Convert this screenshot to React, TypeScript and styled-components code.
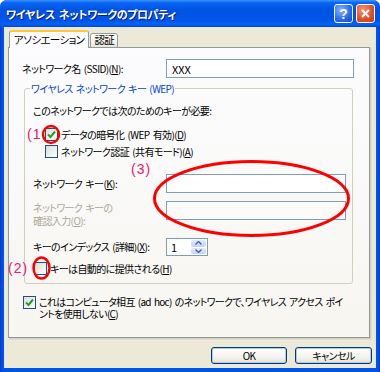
import styled, { createGlobalStyle } from 'styled-components';

const FONT = `"Noto Sans CJK JP", "Noto Sans", sans-serif`;

const GlobalStyle = createGlobalStyle`
  html, body {
    margin: 0;
    padding: 0;
    background: #ffffff;
  }
  body {
    font-family: ${FONT};
  }
`;

const Window = styled.div`
  position: relative;
  width: 380px;
  height: 372px;
  box-sizing: border-box;
  display: flex;
  flex-direction: column;
  background: linear-gradient(to right, #0831d9, #0054e3 2px, #0054e3 calc(100% - 2px), #0831d9);
  border-radius: 7px 7px 0 0;
  overflow: hidden;
  font-family: ${FONT};
  font-size: 10px;
  letter-spacing: -0.6px;
  word-spacing: 1.5px;
  font-feature-settings: "palt";
  text-autospace: no-autospace;
  color: #000000;
`;

const TitleBar = styled.div`
  flex: none;
  height: 27px;
  display: flex;
  align-items: center;
  padding: 0 5px 0 6px;
  background: linear-gradient(
    to bottom,
    #3d95ff 0%,
    #0a66f5 10%,
    #0054e3 35%,
    #0055e8 75%,
    #0062f7 90%,
    #0048d4 100%
  );
`;

const Title = styled.div`
  flex: 1;
  color: #ffffff;
  font-weight: bold;
  font-size: 11px;
  letter-spacing: -0.4px;
  word-spacing: 2px;
  text-shadow: 1px 1px 0 #0a1883;
  white-space: nowrap;
`;

const CaptionButton = styled.div<{ $kind: 'help' | 'close' }>`
  width: 17px;
  height: 17px;
  margin-left: ${({ $kind }) => ($kind === 'close' ? '3px' : '0')};
  border: 1px solid #ffffff;
  border-radius: 3px;
  display: flex;
  align-items: center;
  justify-content: center;
  background: ${({ $kind }) =>
    $kind === 'close'
      ? 'radial-gradient(circle at 35% 30%, #f49a7a, #e0512a 55%, #c23a13)'
      : 'radial-gradient(circle at 35% 30%, #8cb4ff, #2a6ef5 55%, #1548c8)'};
  color: #ffffff;
  font-family: "Liberation Sans", sans-serif;
  font-weight: bold;
  font-size: 14px;
  letter-spacing: 0;
  line-height: 1;
`;

const Body = styled.div`
  flex: 1;
  margin: 0 4px 4px 4px;
  padding: 3px 6px 0 4px;
  background: #ece9d8;
  display: flex;
  flex-direction: column;
`;

const TabStrip = styled.div`
  display: flex;
  align-items: flex-end;
  height: 18px;
  margin-left: 1px;
  margin-bottom: -1px;
  position: relative;
  z-index: 1;
`;

const Tab = styled.div<{ $active?: boolean }>`
  box-sizing: border-box;
  height: ${({ $active }) => ($active ? '18px' : '15px')};
  padding: 0 ${({ $active }) => ($active ? '4px' : '3px')};
  margin-right: ${({ $active }) => ($active ? '1px' : '0')};
  display: flex;
  align-items: center;
  border: 1px solid #919b9c;
  border-bottom: ${({ $active }) => ($active ? 'none' : '1px solid #919b9c')};
  border-top: ${({ $active }) => ($active ? '2px solid #ffc83c' : '1px solid #919b9c')};
  border-radius: 3px 3px 0 0;
  background: ${({ $active }) =>
    $active ? '#fcfcfe' : 'linear-gradient(to bottom, #ffffff, #f3f2ec 70%, #e6e4da)'};
  white-space: nowrap;
  font-size: 10.5px;
  line-height: 1;
`;

const Panel = styled.div`
  box-sizing: border-box;
  height: 291px;
  border: 1px solid #919b9c;
  box-shadow: 1px 1px 0 #d0cebf, 2px 2px 0 #e3e0d0;
  background: linear-gradient(to bottom, #fcfcfe, #f7f6f1);
  padding: 11px 0 0 13px;
  display: flex;
  flex-direction: column;
`;

const Row = styled.div<{ $top?: number; $align?: string; $height?: number }>`
  display: flex;
  align-items: ${({ $align }) => $align || 'center'};
  margin-top: ${({ $top }) => $top || 0}px;
  height: ${({ $height }) => ($height ? `${$height}px` : 'auto')};
  white-space: nowrap;
`;

const Label = styled.div<{ $width: number; $disabled?: boolean }>`
  width: ${({ $width }) => $width}px;
  flex: none;
  line-height: ${({ $disabled }) => ($disabled ? '13px' : '12px')};
  color: ${({ $disabled }) => ($disabled ? '#aca899' : '#000000')};
`;

const TextBox = styled.div<{ $width: number; $disabled?: boolean }>`
  box-sizing: border-box;
  width: ${({ $width }) => $width}px;
  height: 19px;
  flex: none;
  border: 1px solid #7f9db9;
  background: ${({ $disabled }) => ($disabled ? '#fbfbf9' : '#ffffff')};
  padding: 0 5px;
  display: flex;
  align-items: center;
  font-size: 11px;
  letter-spacing: 0;
`;

const GroupBox = styled.div`
  position: relative;
  box-sizing: border-box;
  width: 329px;
  margin: 10px 0 0 2px;
  border: 1px solid #d0d0bf;
  border-radius: 3px;
  padding: 0 0 8px 8px;
  display: flex;
  flex-direction: column;
`;

const Legend = styled.div`
  position: absolute;
  top: -7px;
  left: 5px;
  padding: 0 1px;
  background: #fcfcfe;
  color: #0046d5;
  line-height: 13px;
  white-space: nowrap;
`;

const Plain = styled.div`
  line-height: 14px;
  white-space: nowrap;
`;

const CheckRow = styled.div<{ $top: number; $indent?: number; $align?: string }>`
  display: flex;
  align-items: ${({ $align }) => $align || 'center'};
  gap: 3px;
  height: ${({ $align }) => ($align ? 'auto' : '13px')};
  margin-top: ${({ $top }) => $top}px;
  margin-left: ${({ $indent }) => $indent || 0}px;
  white-space: nowrap;
  line-height: 12px;
`;

const CheckLabel = styled.span<{ $lines?: boolean }>`
  display: block;
  line-height: 12px;
  letter-spacing: ${({ $lines }) => ($lines ? '-0.7px' : 'inherit')};
  white-space: nowrap;
`;

const Box = styled.div`
  box-sizing: border-box;
  width: 13px;
  height: 13px;
  flex: none;
  border: 1px solid #1c5180;
  background: linear-gradient(135deg, #dcdcd7, #ffffff);
  display: flex;
  align-items: center;
  justify-content: center;
`;

const Spin = styled.div`
  box-sizing: border-box;
  width: 42px;
  height: 18px;
  border: 1px solid #7f9db9;
  background: #ffffff;
  display: flex;
  align-items: stretch;
`;

const SpinValue = styled.div`
  flex: 1;
  padding-left: 4px;
  display: flex;
  align-items: center;
  font-size: 11px;
`;

const SpinButtons = styled.div`
  width: 15px;
  display: flex;
  flex-direction: column;
  gap: 1px;
  padding: 1px;
`;

const SpinButton = styled.div`
  flex: 1;
  border-radius: 2px;
  background: linear-gradient(to bottom, #e2ebfd, #c3d3fd);
  display: flex;
  align-items: center;
  justify-content: center;
`;

const ButtonRow = styled.div`
  display: flex;
  justify-content: flex-end;
  gap: 8px;
  margin: 9px -2px 0 0;
`;

const Button = styled.div<{ $width: number }>`
  box-sizing: border-box;
  width: ${({ $width }) => $width}px;
  height: 17px;
  border: 1px solid #003c74;
  border-radius: 3px;
  background: linear-gradient(to bottom, #ffffff, #f4f3ee 60%, #e3e0d6);
  box-shadow: inset 0 0 0 1px #b2c8f0;
  display: flex;
  align-items: center;
  justify-content: center;
  line-height: 1;
`;

const Annotations = styled.svg`
  position: absolute;
  left: 0;
  top: 0;
  pointer-events: none;
`;

const Mark = styled.span<{ $x: number; $y: number }>`
  position: absolute;
  left: ${({ $x }) => $x}px;
  top: ${({ $y }) => $y}px;
  color: #f0146e;
  font-family: "Liberation Sans", sans-serif;
  font-size: 14px;
  line-height: 1;
  letter-spacing: 1px;
  pointer-events: none;
`;

const Check = () => (
  <svg width="9" height="9" viewBox="0 0 9 9">
    <path d="M1 4.5 L3.5 7 L8 1.5" fill="none" stroke="#21a121" strokeWidth="2" />
  </svg>
);

const CheckBox = ({ checked }: { checked?: boolean }) => <Box>{checked && <Check />}</Box>;

const Arrow = ({ up }: { up?: boolean }) => (
  <svg width="7" height="4" viewBox="0 0 7 4">
    <path
      d={up ? 'M0.5 3.5 L3.5 0.5 L6.5 3.5' : 'M0.5 0.5 L3.5 3.5 L6.5 0.5'}
      fill="none"
      stroke="#4d6185"
      strokeWidth="1.3"
    />
  </svg>
);

export default function App() {
  return (
    <>
      <GlobalStyle />
      <Window>
        <TitleBar>
          <Title>ワイヤレス ネットワークのプロパティ</Title>
          <CaptionButton $kind="help">?</CaptionButton>
          <CaptionButton $kind="close">
            <svg width="9" height="9" viewBox="0 0 9 9">
              <path d="M1 1 L8 8 M8 1 L1 8" stroke="#ffffff" strokeWidth="2" />
            </svg>
          </CaptionButton>
        </TitleBar>

        <Body>
          <TabStrip>
            <Tab $active>アソシエーション</Tab>
            <Tab>認証</Tab>
          </TabStrip>

          <Panel>
            <Row>
              <Label $width={144}>
                ネットワーク名 (SSID)(<u>N</u>):
              </Label>
              <TextBox $width={188}>XXX</TextBox>
            </Row>

            <GroupBox>
              <Legend>ワイヤレス ネットワーク キー (WEP)</Legend>
              <Plain style={{ marginTop: 15 }}>このネットワークでは次のためのキーが必要:</Plain>

              <CheckRow $top={10} $indent={12}>
                <CheckBox checked />
                <CheckLabel>
                  データの暗号化 (WEP 有効)(<u>D</u>)
                </CheckLabel>
              </CheckRow>
              <CheckRow $top={4} $indent={12}>
                <CheckBox />
                <CheckLabel>
                  ネットワーク認証 (共有モード)(<u>A</u>)
                </CheckLabel>
              </CheckRow>

              <Row $top={16} $height={19}>
                <Label $width={133}>
                  ネットワーク キー(<u>K</u>):
                </Label>
                <TextBox $width={180} />
              </Row>

              <Row $top={8} $height={19} $align="flex-start">
                <Label $width={133} $disabled>
                  ネットワーク キーの
                  <br />
                  確認入力(<u>O</u>):
                </Label>
                <TextBox $width={180} $disabled />
              </Row>

              <Row $top={18} $height={18}>
                <Label $width={133}>
                  キーのインデックス (詳細)(<u>X</u>):
                </Label>
                <Spin>
                  <SpinValue>1</SpinValue>
                  <SpinButtons>
                    <SpinButton>
                      <Arrow up />
                    </SpinButton>
                    <SpinButton>
                      <Arrow />
                    </SpinButton>
                  </SpinButtons>
                </Spin>
              </Row>

              <CheckRow $top={6} $indent={1}>
                <CheckBox />
                <CheckLabel>
                  キーは自動的に提供される(<u>H</u>)
                </CheckLabel>
              </CheckRow>
            </GroupBox>

            <CheckRow $top={12} $indent={1} $align="flex-start">
              <CheckBox checked />
              <CheckLabel $lines>
                これはコンピュータ相互 (ad hoc) のネットワークで、ワイヤレス アクセス ポイ
                <br />
                ントを使用しない(<u>C</u>)
              </CheckLabel>
            </CheckRow>
          </Panel>

          <ButtonRow>
            <Button $width={76}>OK</Button>
            <Button $width={77}>キャンセル</Button>
          </ButtonRow>
        </Body>

        <Annotations width="380" height="372" viewBox="0 0 380 372">
          <ellipse cx="51" cy="134.5" rx="8" ry="8.5" fill="none" stroke="#ff0000" strokeWidth="2.5" />
          <ellipse cx="41.5" cy="268" rx="8" ry="10.5" fill="none" stroke="#ff0000" strokeWidth="2.5" />
          <ellipse cx="251.5" cy="198.5" rx="97" ry="37" fill="none" stroke="#ff0000" strokeWidth="3" />
        </Annotations>
        <Mark $x={27} $y={127}>(1</Mark>
        <Mark $x={8} $y={261}>(2)</Mark>
        <Mark $x={131} $y={162}>(3)</Mark>
      </Window>
    </>
  );
}
